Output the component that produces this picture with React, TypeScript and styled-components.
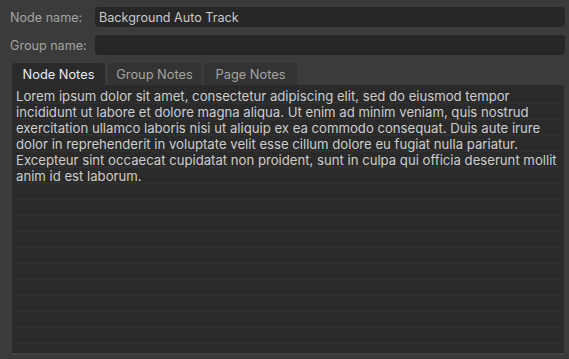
import React, { useState } from 'react';
import styled, { createGlobalStyle } from 'styled-components';

const GlobalStyle = createGlobalStyle`
  html, body {
    margin: 0;
    padding: 0;
    background: #3b3b3b;
  }
  body {
    font-family: Inter, "Liberation Sans", sans-serif;
    -webkit-font-smoothing: antialiased;
  }
`;

const STDPage = styled.div`
  display: flex;
  flex-direction: column;
  width: 569px;
  height: 359px;
  box-sizing: border-box;
  padding: 7px 4px 6px 0;
  background: #3b3b3b;
`;

const STDFieldRow = styled.div`
  display: flex;
  align-items: center;
  height: 20px;
  margin-bottom: 8px;
`;

const STDLabel = styled.label`
  width: 85px;
  padding-left: 10px;
  font-size: 12.6px;
  color: #a3a3a3;
  flex-shrink: 0;
`;

const STDInput = styled.input`
  flex: 1;
  height: 20px;
  box-sizing: border-box;
  padding: 0 4px;
  border: none;
  border-radius: 4px;
  background: #272727;
  font-family: inherit;
  font-size: 12.6px;
  color: #c9c9c9;
  outline: none;
`;

const STDTabBar = styled.div`
  display: flex;
  gap: 3px;
  margin-left: 12px;
  height: 22px;
`;

const STDTab = styled.button<{ isActive?: boolean }>`
  width: 93px;
  padding: 0;
  border: none;
  border-radius: 4px 4px 0 0;
  background: ${({ isActive }) => (isActive ? '#2a2a2a' : '#333333')};
  font-family: inherit;
  font-size: 12.8px;
  color: ${({ isActive }) => (isActive ? '#ececec' : '#a3a3a3')};
  cursor: pointer;
`;

const STDPanel = styled.div`
  flex: 1;
  margin: 0 1px 0 12px;
  padding: 3px 4px 0;
  background: #2a2a2a;
  box-shadow: 0 1px 0 #454545;
`;

const STDNotes = styled.textarea`
  display: block;
  width: 100%;
  height: 100%;
  box-sizing: border-box;
  padding: 0;
  border: none;
  resize: none;
  outline: none;
  background: repeating-linear-gradient(
    to bottom,
    transparent 0,
    transparent 14px,
    #2f2f2f 14px,
    #2f2f2f 16px
  );
  font-family: inherit;
  font-size: 13.15px;
  line-height: 16px;
  color: #cdcdcd;
  overflow: hidden;
`;

const LOREM =
  'Lorem ipsum dolor sit amet, consectetur adipiscing elit, sed do eiusmod tempor incididunt ut labore et dolore magna aliqua. Ut enim ad minim veniam, quis nostrud exercitation ullamco laboris nisi ut aliquip ex ea commodo consequat. Duis aute irure dolor in reprehenderit in voluptate velit esse cillum dolore eu fugiat nulla pariatur. Excepteur sint occaecat cupidatat non proident, sunt in culpa qui officia deserunt mollit anim id est laborum.';

const tabs = ['Node Notes', 'Group Notes', 'Page Notes'];

const App: React.FC = () => {
  const [activeTab, setActiveTab] = useState(0);
  const [nodeName, setNodeName] = useState('Background Auto Track');
  const [groupName, setGroupName] = useState('');
  const [notes, setNotes] = useState(LOREM);

  return (
    <>
      <GlobalStyle />
      <STDPage>
        <STDFieldRow>
          <STDLabel>Node name:</STDLabel>
          <STDInput value={nodeName} onChange={(e) => setNodeName(e.target.value)} />
        </STDFieldRow>
        <STDFieldRow>
          <STDLabel>Group name:</STDLabel>
          <STDInput value={groupName} onChange={(e) => setGroupName(e.target.value)} />
        </STDFieldRow>
        <STDTabBar>
          {tabs.map((tab, i) => (
            <STDTab key={tab} isActive={i === activeTab} onClick={() => setActiveTab(i)}>
              {tab}
            </STDTab>
          ))}
        </STDTabBar>
        <STDPanel>
          <STDNotes value={notes} onChange={(e) => setNotes(e.target.value)} />
        </STDPanel>
      </STDPage>
    </>
  );
};

export default App;
